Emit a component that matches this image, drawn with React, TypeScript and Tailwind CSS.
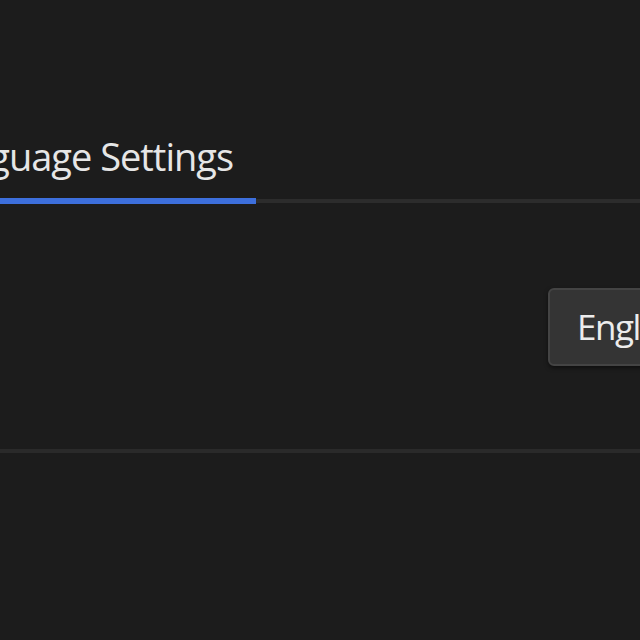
export default function App() {
  return (
    <div className="w-[640px] h-[640px] overflow-hidden bg-[#1c1c1c] font-['Open_Sans','Noto_Sans',sans-serif]">
      {/* Tab strip */}
      <div className="pt-[128px] flex border-b-4 border-[#2c2c2c] w-[900px]">
        <div className="ml-[-84px] w-[340px] -mb-[5px] border-b-[6px] border-[#3d6fdc] pb-[14px] pl-[12px]">
          <span className="text-[38px] leading-[56px] font-medium tracking-[-1px] text-[#e6e6e6] whitespace-nowrap">Language Settings</span>
        </div>
      </div>

      {/* Setting row */}
      <div className="h-[250px] flex items-center border-b-4 border-[#2a2a2a] w-[900px]">
        <div className="ml-[548px] mt-[2px] h-[78px] flex items-center pl-[27px] pr-[40px] rounded-[6px] bg-[#343434] border-2 border-[#444] shadow-[0_2px_4px_rgba(0,0,0,0.5)]">
          <span className="text-[35px] font-medium tracking-[-1.5px] text-[#ececec] whitespace-nowrap">English</span>
        </div>
      </div>
    </div>
  )
}
